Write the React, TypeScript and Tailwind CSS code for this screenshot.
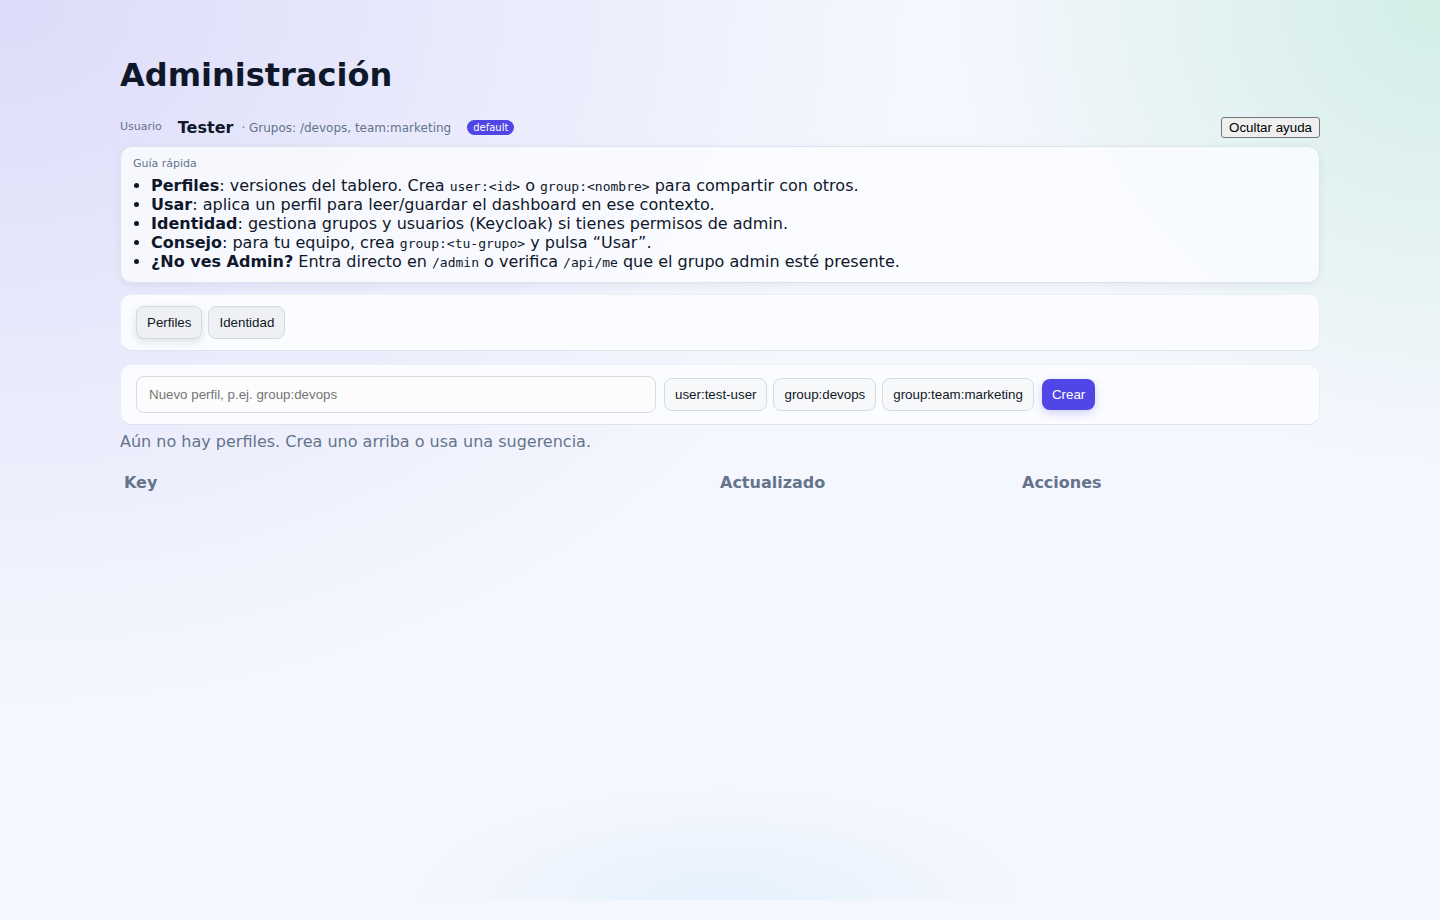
import React from "react";

const suggestions = ["user:test-user", "group:devops", "group:team:marketing"];

function Code({ children }: { children: React.ReactNode }) {
  return <code className="font-['DejaVu_Sans_Mono',monospace] text-[13px] leading-none">{children}</code>;
}

export default function App() {
  return (
    <div className="min-h-screen bg-[#f5f7fe] font-['DejaVu_Sans',sans-serif] text-[#0f172a]">
      <div className="min-h-[900px] bg-[radial-gradient(900px_700px_at_0%_0%,#dcdcf9,transparent),radial-gradient(480px_460px_at_100%_0%,#d3eee7,transparent),radial-gradient(300px_110px_at_50%_100%,#e5f1fd,transparent)]">
        <main className="mx-auto w-[1200px] pt-[57px]">
          <h1 className="text-[32px] font-bold leading-[37px]">Administración</h1>

          <div className="mt-[23px] flex h-[21px] items-center justify-between">
            <div className="flex items-center">
              <span className="text-[11px] text-[#64748b]">Usuario</span>
              <span className="ml-4 text-[16px] font-bold">Tester</span>
              <span className="ml-2 text-[12px] text-[#64748b]">· Grupos: /devops, team:marketing</span>
              <span className="ml-4 rounded-full bg-[#4f46e5] px-1.5 text-[10px] leading-[15px] text-white">default</span>
            </div>
            <button className="h-[21px] rounded-[3px] border border-[#767676] bg-[#efefef] px-[7px] font-['Liberation_Sans',Arial,sans-serif] text-[13.333px] leading-[15px] text-black">
              Ocultar ayuda
            </button>
          </div>

          <section className="mt-2 rounded-xl border border-[#dde2ec] bg-[#fbfcff]/80 px-3 pt-[10px] pb-[11px] shadow-[0_2px_8px_rgba(15,23,42,0.06)]">
            <div className="text-[11px] leading-[14px] text-[#64748b]">Guía rápida</div>
            <ul className="mt-[5px] list-disc pl-[18px] text-[16px] leading-[19px]">
              <li>
                <b>Perfiles</b>: versiones del tablero. Crea <Code>user:&lt;id&gt;</Code> o <Code>group:&lt;nombre&gt;</Code> para compartir con otros.
              </li>
              <li>
                <b>Usar</b>: aplica un perfil para leer/guardar el dashboard en ese contexto.
              </li>
              <li>
                <b>Identidad</b>: gestiona grupos y usuarios (Keycloak) si tienes permisos de admin.
              </li>
              <li>
                <b>Consejo</b>: para tu equipo, crea <Code>group:&lt;tu-grupo&gt;</Code> y pulsa “Usar”.
              </li>
              <li>
                <b>¿No ves Admin?</b> Entra directo en <Code>/admin</Code> o verifica <Code>/api/me</Code> que el grupo admin esté presente.
              </li>
            </ul>
          </section>

          <section className="mt-[11px] flex gap-1.5 rounded-xl border border-[#eef0f6] border-b-[#dfe3ec] bg-[#fbfcff] px-[15px] py-[11px]">
            <button className="h-[33px] rounded-lg border border-[#d3d8e2] bg-[#eef0f4] px-[10px] font-['Liberation_Sans',Arial,sans-serif] text-[13.333px] text-[#111827] shadow-[0_3px_8px_rgba(15,23,42,0.12)]">
              Perfiles
            </button>
            <button className="h-[33px] rounded-lg border border-[#d3d8e2] bg-[#eef0f4] px-[10px] font-['Liberation_Sans',Arial,sans-serif] text-[13.333px] text-[#111827]">
              Identidad
            </button>
          </section>

          <section className="mt-[13px] flex items-center gap-2 rounded-xl border border-[#eef0f6] border-b-[#dfe3ec] bg-[#fbfcff] px-[15px] py-[11px]">
            <input
              placeholder="Nuevo perfil, p.ej. group:devops"
              className="h-[37px] w-[520px] rounded-lg border border-[#d6dae3] bg-[#fcfcfd] px-3 font-['Liberation_Sans',Arial,sans-serif] text-[13.333px] text-[#111827] outline-none placeholder:text-[#757575]"
            />
            <div className="flex gap-1.5">
              {suggestions.map((s) => (
                <button
                  key={s}
                  className="h-[33px] rounded-lg border border-[#d6dae3] bg-[#f7f8fa] px-[10px] font-['Liberation_Sans',Arial,sans-serif] text-[13.333px] text-[#111827]"
                >
                  {s}
                </button>
              ))}
            </div>
            <button className="h-[31px] rounded-lg bg-[#4f46e5] px-[10px] font-['Liberation_Sans',Arial,sans-serif] text-[13.333px] text-white shadow-[0_3px_8px_rgba(79,70,229,0.25)]">
              Crear
            </button>
          </section>

          <p className="mt-[5px] text-[16px] text-[#64748b]">Aún no hay perfiles. Crea uno arriba o usa una sugerencia.</p>

          <div className="mt-[9px] grid grid-cols-[596px_302px_302px] text-[16px] font-bold text-[#64748b]">
            <div className="px-1 py-2">Key</div>
            <div className="px-1 py-2">Actualizado</div>
            <div className="px-1 py-2">Acciones</div>
          </div>
        </main>
      </div>
    </div>
  );
}
